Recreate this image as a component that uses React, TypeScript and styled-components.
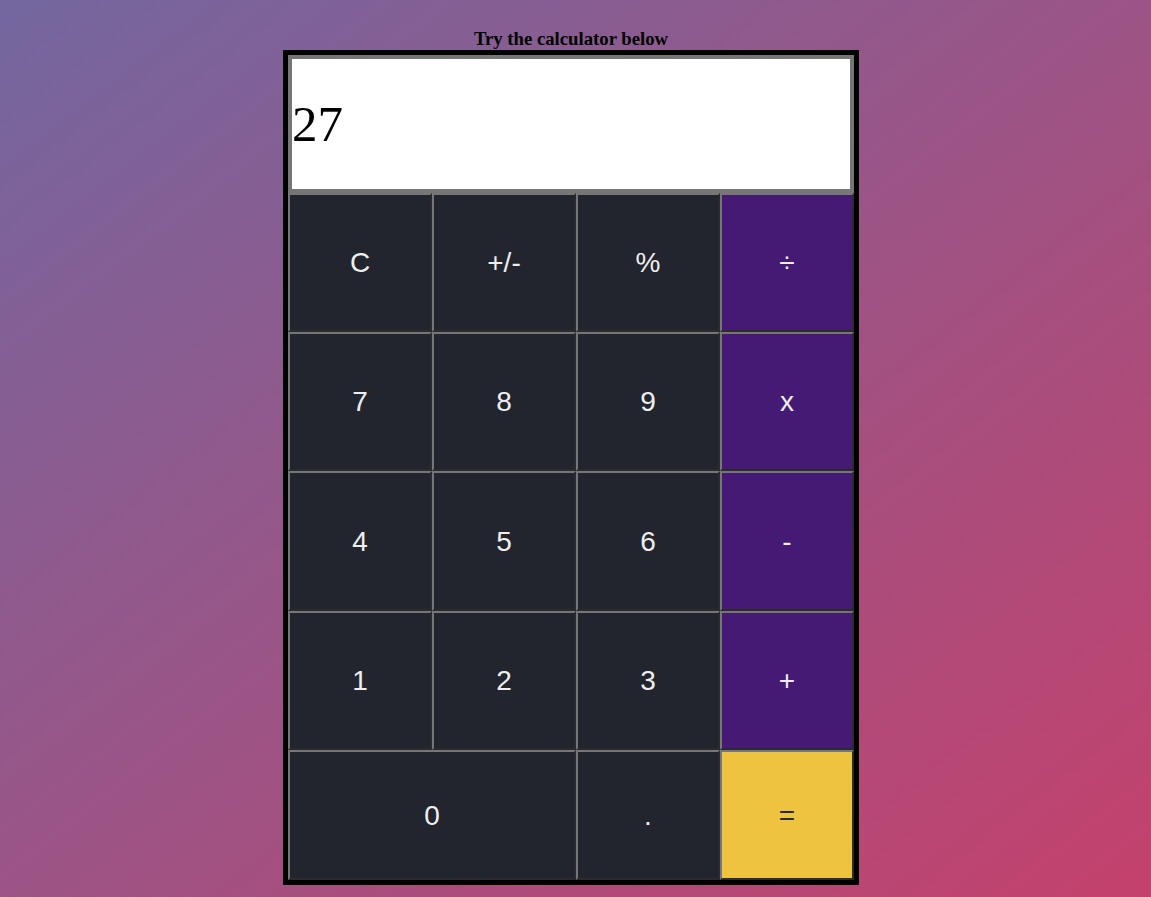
import React from "react";
import styled, { createGlobalStyle } from "styled-components";

const GlobalStyle = createGlobalStyle`
  html, body {
    margin: 0;
    padding: 0;
  }
  body {
    min-height: 100vh;
    background: linear-gradient(to bottom right, #73679f 0%, #c4416c 100%);
    font-family: "Liberation Serif", "Times New Roman", serif;
  }
`;

const Page = styled.main`
  display: flex;
  flex-direction: column;
  align-items: center;
  padding: 28px 9px 0 0;
  gap: 1px;
`;

const Title = styled.h3`
  margin: 0;
  font-family: "Liberation Serif", "Times New Roman", serif;
  font-weight: 700;
  font-size: 18.72px;
  line-height: 21px;
  color: #000;
`;

const Calculator = styled.div`
  border: 5px solid #000;
  width: 566px;
  display: flex;
  flex-direction: column;
`;

const Display = styled.div`
  box-sizing: border-box;
  height: 138px;
  border: 4px solid #767676;
  background: #fff;
  display: flex;
  align-items: center;
  font-family: "Liberation Serif", "Times New Roman", serif;
  font-size: 51px;
  color: #000;
`;

const Keys = styled.div`
  display: grid;
  grid-template-columns: 144px 144px 144px 134px;
  grid-template-rows: 139px 139px 140px 139px 130px;
`;

type Variant = "num" | "op" | "eq";

const bg: Record<Variant, string> = {
  num: "#22252d",
  op: "#451a75",
  eq: "#edc340",
};

const Key = styled.button<{ $variant: Variant; $span?: number }>`
  box-sizing: border-box;
  grid-column: span ${(p) => p.$span ?? 1};
  margin: 0;
  padding: 0;
  border: 2px solid;
  border-color: #767676 #2b2b2b #2b2b2b #767676;
  background: ${(p) => bg[p.$variant]};
  color: ${(p) => (p.$variant === "eq" ? "#2a2b30" : "#eeeeee")};
  font-family: "Liberation Sans", Arial, sans-serif;
  font-size: 28px;
  display: flex;
  align-items: center;
  justify-content: center;
  padding-top: 1px;
  cursor: pointer;
`;

const keys: { label: string; variant: Variant; span?: number }[] = [
  { label: "C", variant: "num" },
  { label: "+/-", variant: "num" },
  { label: "%", variant: "num" },
  { label: "÷", variant: "op" },
  { label: "7", variant: "num" },
  { label: "8", variant: "num" },
  { label: "9", variant: "num" },
  { label: "x", variant: "op" },
  { label: "4", variant: "num" },
  { label: "5", variant: "num" },
  { label: "6", variant: "num" },
  { label: "-", variant: "op" },
  { label: "1", variant: "num" },
  { label: "2", variant: "num" },
  { label: "3", variant: "num" },
  { label: "+", variant: "op" },
  { label: "0", variant: "num", span: 2 },
  { label: ".", variant: "num" },
  { label: "=", variant: "eq" },
];

export default function App() {
  return (
    <>
      <GlobalStyle />
      <Page>
        <Title>Try the calculator below</Title>
        <Calculator>
          <Display>27</Display>
          <Keys>
            {keys.map((k) => (
              <Key key={k.label} $variant={k.variant} $span={k.span}>
                {k.label}
              </Key>
            ))}
          </Keys>
        </Calculator>
      </Page>
    </>
  );
}
